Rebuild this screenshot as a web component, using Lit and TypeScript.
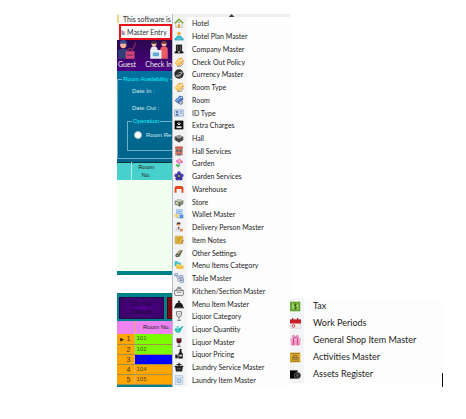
import { LitElement, html, svg, css, TemplateResult } from "lit";
import { customElement, property } from "lit/decorators.js";
import { classMap } from "lit/directives/class-map.js";

const tag = svg`<path d="M1 9 7 2l6-1 3 6-7 7-4 0z" fill="#f2a93b"/><path d="M1 9 7 3l5 0 1 4-6 6z" fill="#ffd07a"/><path d="M5 15h6l4-5" fill="none" stroke="#8f8a86" stroke-width="1.5"/><circle cx="12" cy="5" r="1.3" fill="#fff"/>`;

const icons: Record<string, TemplateResult> = {
  hotel: svg`<path d="M3 8v7h10V8L8 4z" fill="#fbf3df" stroke="#8a8f78" stroke-width=".8"/><path d="M1 8.5 8 2l7 6.5" fill="none" stroke="#7cab3c" stroke-width="2.4"/><path d="M6.500 15v-5h3v5z" fill="#dd8a35"/><circle cx="8" cy="7.300" r="1.200" fill="#55a5d8"/>`,
  plan: svg`<circle cx="8" cy="4" r="3" fill="#f4b23e"/><path d="M3 11q0-4 5-4t5 4z" fill="#37bcc9"/><path d="M1 11h14v4H1z" fill="#2aa3c4"/><path d="M4 12.500h8" stroke="#d8f5fa" stroke-width="1"/>`,
  company: svg`<path d="M3 1h10v12H3z" fill="#222"/><path d="M1 12h14v3H1z" fill="#111"/><path d="M5 3h1.500v8H5zM9.500 3H11v8H9.500z" fill="#666"/><path d="M6.500 11h3v4h-3z" fill="#999"/>`,
  tag,
  currency: svg`<circle cx="8" cy="8" r="7.500" fill="#2b2b2b"/><path d="M3 10q4 1 9-2l1-3q-5 0-6 2M4 12l7-1" fill="none" stroke="#c9c9c9" stroke-width="1.300"/>`,
  room: svg`<path d="M1 9 9 1l5 1 1 5-8 7z" fill="#3b6fb5"/><path d="m3 9 6-6 3 1-7 7z" fill="#86aee0"/><circle cx="11" cy="12" r="3" fill="#b5bcc9" stroke="#4c5e88"/><circle cx="12" cy="4" r="1.100" fill="#fff"/>`,
  id: svg`<path d="M1 3h14v10H1z" fill="#d5e5f6" stroke="#7393bb"/><circle cx="5" cy="6.500" r="1.800" fill="#3b6194"/><path d="M2.500 12q0-3 2.500-3t2.500 3z" fill="#3b6194"/><path d="M9 6h4M9 8.500h4" stroke="#4d75a8"/>`,
  charges: svg`<path d="M1 1h14v14H1z" fill="#080808"/><path d="M4 10h8v3H4z" fill="#ddd"/><path d="M8 3v5M5 5l3 3 3-3" fill="none" stroke="#fff" stroke-width="1.300"/>`,
  hall: svg`<path d="m1 6 7-3 7 3v5l-7 4-7-4z" fill="#555"/><path d="m1 6 7-3 7 3-7 3z" fill="#9a9a9a"/><path d="M8 9v6M4 7.500v5M12 7.500v5" stroke="#222"/>`,
  services: svg`<path d="M2 1h12v14H2z" fill="#b9837b"/><path d="M2 1h12v3H2z" fill="#cd5848"/><path d="M4 6h3v3H4zM9 6h3v3H9z" fill="#61554f"/><path d="M3 10h10v3H3z" fill="#de6f57"/><path d="M5 14h6" stroke="#3f6975" stroke-width="2"/>`,
  garden: svg`<path d="M9 8q1 5-3 7M8 12q-4-3-5 0 2 2 5 0" fill="#5cc45d" stroke="#45b754" stroke-width="1.400"/><circle cx="6" cy="5" r="2.500" fill="#f06bd1"/><circle cx="9" cy="3" r="2.500" fill="#f59ae0"/><circle cx="11.500" cy="6" r="2.500" fill="#ec5ec6"/><circle cx="8" cy="7.500" r="2.300" fill="#f48bd9"/><circle cx="9" cy="5.200" r="1.500" fill="#ffe14d"/>`,
  flower: svg`<circle cx="8" cy="3.500" r="3" fill="#453fb0"/><circle cx="3.600" cy="7" r="3" fill="#4d48ba"/><circle cx="12.400" cy="7" r="3" fill="#4d48ba"/><circle cx="5.300" cy="12" r="3" fill="#38339a"/><circle cx="10.700" cy="12" r="3" fill="#38339a"/><circle cx="8" cy="8" r="3.400" fill="#2a246f"/><circle cx="8" cy="8" r="1.500" fill="#ece64f"/>`,
  warehouse: svg`<path d="M1 14V6q0-3 3-3h8q3 0 3 3v8h-3V8H4v6z" fill="#e4481e"/>`,
  store: svg`<path d="m1 6 6-3 8 2v6l-6 4-8-3z" fill="#85897c"/><path d="m1 6 6-3 8 2-6 3z" fill="#c5c9bc"/><path d="M9 8v7" stroke="#454a40"/><path d="m3 8 4 1v3l-4-1z" fill="#d2d8a8"/>`,
  wallet: svg`<path d="M4 1h9v13H4z" fill="#c3dcf8" stroke="#78a8df"/><path d="M6 4h5M6 7h5" stroke="#4f8cd0"/><path d="M1 8h6v5H1z" fill="#f5d36c"/><path d="M9 9h6v6H9z" fill="#5794dc"/>`,
  delivery: svg`<circle cx="7" cy="4" r="3" fill="#e9b48f"/><path d="M4 4q0-4 4-3.500 3 0 2.500 3.500Q8 2 4 4z" fill="#503d35"/><path d="M2 15q0-7 5-7t6 7z" fill="#d9dce2"/><path d="m6 8 1.500 5L9 8z" fill="#5e5b60"/><path d="M10 11h4v4h-4z" fill="#e07d37"/>`,
  notes: svg`<path d="M2 2h12v12H2z" fill="#f0bf41" stroke="#c1922b"/><path d="M4 5h8M4 8h6M4 11h5" stroke="#8a6a25"/><path d="m11 13 4-5" stroke="#716a54" stroke-width="1.500"/>`,
  settings: svg`<path d="m4 13 7-10 3 1-5 10z" fill="#776f52"/><path d="m3 9 7-7 1 3-6 7z" fill="#a9a37f"/><circle cx="5" cy="12" r="2.800" fill="#50564a"/><circle cx="5" cy="12" r="1" fill="#ddd"/>`,
  folders: svg`<path d="M1 2h5l1 2h4v6H1z" fill="#3fc0ce"/><path d="M4 6h4l1 2h6v6H4z" fill="#ffd55f"/><path d="M4 10h11v4H4z" fill="#f7bf3d"/>`,
  tree: svg`<path d="M3 3v3h6M6 6v7h5M6 9h5" fill="none" stroke="#6d7f9f" stroke-width="1"/><path d="M1 1h5v3H1zM9 4h5v3H9zM10 8h5v3h-5zM10 12h5v3h-5z" fill="#e3eefb" stroke="#4c6896" stroke-width=".900"/>`,
  kitchen: svg`<path d="M1 7h14v6q0 2-2 2H3q-2 0-2-2z" fill="#f9f9f9" stroke="#555" stroke-width="1.200"/><path d="M3 7q0-3 5-3t5 3M6 4V2h4v2M4 10h8" fill="none" stroke="#555" stroke-width="1.200"/>`,
  cloche: svg`<path d="M1 13q1-7 7-8 6 1 7 8z" fill="#191919"/><circle cx="8" cy="4" r="1.700" fill="#191919"/><path d="M0 14h16" stroke="#191919" stroke-width="1.600"/>`,
  glass: svg`<path d="M4 1h8v5q0 3-4 4-4-1-4-4zM8 10v4M5 15h6" fill="#f5f5f5" stroke="#555" stroke-width="1.200"/><path d="m6 4 3 3M9 3l1 2" stroke="#444"/>`,
  teal: svg`<path d="M1 8q1-2 4-1 3 1 5-1l3-3 2 1-3 4q-1 6-5 6-5 0-6-6z" fill="#25b9b8"/><path d="M6 3v3M4 5h4" stroke="#4accc8" stroke-width="1.500"/><path d="m4 10 5 1" stroke="#84e3e0" stroke-width="1.200"/>`,
  wine: svg`<path d="M4 2h8v4q0 4-4 4T4 6z" fill="#5e1720"/><path d="M5 2h6v2H5z" fill="#9c4a50"/><path d="M8 10v4M5 15h6" stroke="#513d3d" stroke-width="1.300"/>`,
  bottle: svg`<path d="M9 0h3v5l2 2v8H7V7l2-2z" fill="#121212"/><path d="M2 9h4v6H2z" fill="#222"/><path d="M8.500 9h4v3h-4z" fill="#ddd"/>`,
  laundry: svg`<path d="M2 8h12l-1 7H3z" fill="#222"/><path d="M1 6h14v2H1zM7 1h2v5H7z" fill="#222"/><path d="M4 4h8" stroke="#222" stroke-width="1.500"/><path d="M5 11h6" stroke="#888"/>`,
  washer: svg`<path d="M2 1h12v14H2z" fill="#e7f1fa" stroke="#9bb3ce"/><path d="M2 4.500h12" stroke="#8da9c8"/><path d="M5 7h6v5H5z" fill="#bcd7ef" stroke="#7899bd"/>`,
  tax: svg`<path d="M0 1h15v14H0z" fill="#6fae36"/><path d="M2 3h11v10H2z" fill="#a1d45f" stroke="#4e8a24"/><path d="M10 5.500q-4-2-4 .5 0 1.500 2 2t2 2q-1 2-4.500.5M8 3.500v9" fill="none" stroke="#2d6017" stroke-width="1.200"/>`,
  calendar: svg`<path d="M0 4h16v11H0z" fill="#f1eded" stroke="#c4b4b4" stroke-width=".6"/><path d="M0 2h16v6H0z" fill="#cc2029"/><path d="M4 0v4M11 0v4" stroke="#8c1d22" stroke-width="1.600"/><circle cx="5" cy="11.500" r="2" fill="none" stroke="#c8323a" stroke-width="1.200"/>`,
  gift: svg`<path d="M1 6h14v9H1z" fill="#f09ac4"/><path d="M0 4h16v4H0z" fill="#f5b6d6"/><path d="M5 4v11M11 4v11" stroke="#d4488e" stroke-width="1.800"/><path d="M8 4Q3 4 4 1q3-1 4 3 1-4 4-3 1 3-4 3z" fill="none" stroke="#d4488e" stroke-width="1.300"/>`,
  chest: svg`<path d="M0 1h15v14H0z" fill="#ddaa2c"/><path d="M1 2h13M1 13.500h13" stroke="#8f6a19" stroke-width="1.200"/><path d="M3 7h9v4H3z" fill="#7b5a1b"/><path d="M5 7V5h5v2" fill="none" stroke="#7b5a1b"/><path d="M4 9h7" stroke="#ffe185"/>`,
  assets: svg`<path d="M0 2h11v12H0z" fill="#050505"/><circle cx="11" cy="9.500" r="4.600" fill="#111" stroke="#bbb" stroke-width=".7"/><path d="M9 7.500h4M9 9.500h4M9 11.500h4" stroke="#999" stroke-width=".8"/>`,
  guest: svg`<circle cx="5" cy="4" r="2.500" fill="#f5b694"/><path d="M2 3q0-3 3-3t3 3z" fill="#3c4f92"/><path d="M1 15V9q0-2 4-2t4 2v6z" fill="#303f78"/><path d="M7 9h7v6H7z" fill="#d6437b"/><path d="M9 9V7h3v2M8 12h5M13 7l2-5" fill="none" stroke="#7f3157" stroke-width="1"/>`,
  checkin: svg`<circle cx="4" cy="3" r="2" fill="#f4c0a0"/><circle cx="12" cy="3" r="2" fill="#f4c0a0"/><path d="M2 3q0-3 3-2l1 2z" fill="#3b2430"/><path d="M10 3q0-3 3-2l1 2z" fill="#7c3131"/><path d="M1 9q0-4 3-4t3 4z" fill="#ede7ee"/><path d="M9 15V8q0-3 3-3t3 3v7z" fill="#ec5a64"/><path d="M1 8h9v7H1z" fill="#e5f0f5"/><path d="M3 10h5v3H3z" fill="#61a9cf"/>`,
  entry: svg`<path d="M1 1h6v14H1z" fill="#8fa9c9"/><circle cx="9" cy="7" r="3" fill="#d37c62"/><path d="M4 15q0-5 5-5t5 5z" fill="#4f80b7"/>`,
};

@customElement("ui-icon")
class UiIcon extends LitElement {
  @property() name = "";
  static styles = css`
    :host { display: block; flex: none; }
    svg { display: block; width: 100%; height: 100%; }
  `;
  render() {
    return html`<svg viewBox="0 0 16 16" aria-hidden="true">${icons[this.name]}</svg>`;
  }
}

const masters: [string, string][] = [
  ["hotel", "Hotel"], ["plan", "Hotel Plan Master"], ["company", "Company Master"],
  ["tag", "Check Out Policy"], ["currency", "Currency Master"], ["tag", "Room Type"],
  ["room", "Room"], ["id", "ID Type"], ["charges", "Extra Charges"], ["hall", "Hall"],
  ["services", "Hall Services"], ["garden", "Garden"], ["flower", "Garden Services"],
  ["warehouse", "Warehouse"], ["store", "Store"], ["wallet", "Wallet Master"],
  ["delivery", "Delivery Person Master"], ["notes", "Item Notes"], ["settings", "Other Settings"],
  ["folders", "Menu Items Category"], ["tree", "Table Master"], ["kitchen", "Kitchen/Section Master"],
  ["cloche", "Menu Item Master"], ["glass", "Liquor Category"], ["teal", "Liquor Quantity"],
  ["wine", "Liquor Master"], ["bottle", "Liquor Pricing"], ["laundry", "Laundry Service Master"],
  ["washer", "Laundry Item Master"],
];

const extras: [string, string][] = [
  ["tax", "Tax"], ["calendar", "Work Periods"], ["gift", "General Shop Item Master"],
  ["chest", "Activities Master"], ["assets", "Assets Register"],
];

@customElement("drop-menu")
class DropMenu extends LitElement {
  @property({ attribute: false }) items: [string, string][] = [];
  @property({ type: Boolean, reflect: true }) large = false;
  static styles = css`
    :host { display: flex; flex-direction: column; }
    .list {
      flex: 1; display: flex; flex-direction: column; margin: 0; padding: 0; list-style: none;
      background: linear-gradient(90deg, #f3f4f5 14px, #fdfdfd 14px);
    }
    .row { flex: 1 1 0; min-height: 12px; display: flex; }
    .item {
      flex: 1; display: flex; align-items: center; gap: 8px; min-width: 0; padding: 0 0 0 1px;
      border: 0; background: none; color: #1c1c1c; font: 7px/12px Lato, "Noto Sans", sans-serif;
      text-align: left; white-space: nowrap;
    }
    ui-icon { width: 10px; height: 10px; }
    :host([large]) .row { min-height: 17px; }
    :host([large]) .item { font-size: 9px; padding: 0; gap: 12px; }
    :host([large]) ui-icon { width: 11px; height: 11px; }
  `;
  render() {
    return html`<ul class="list">
      ${this.items.map(([icon, label]) => html`<li class="row">
        <button class="item" type="button"><ui-icon name=${icon}></ui-icon>${label}</button>
      </li>`)}
    </ul>`;
  }
}

@customElement("app-root")
class AppRoot extends LitElement {
  static styles = css`
    :host { display: block; min-height: 100vh; background: #fff; font: 6px/8px "Liberation Sans", sans-serif; }
    * { box-sizing: border-box; }
    .page {
      display: grid; grid-template-columns: 55px 118px minmax(0, 1fr); align-items: stretch;
      padding: 14px 23px 0 117px;
    }
    .desk { display: flex; flex-direction: column; min-width: 0; overflow: hidden; background: #00828c; white-space: nowrap; }
    .title {
      height: 10px; display: flex; align-items: center; gap: 4px; background: #f6f7f9;
      font: 7px/8px Lato, sans-serif; color: #333;
    }
    .mark { width: 2px; height: 8px; background: #f1d48b; }
    .strip { display: flex; padding-left: 2px; background: #f6f7f9; }
    .entry {
      flex: 1; height: 16px; display: flex; align-items: center; gap: 1px; padding: 0;
      border: 2px solid #e8121b; background: #fafafa; color: #333; font: 7px/8px Lato, sans-serif;
    }
    .entry ui-icon { width: 5px; height: 9px; }
    .tools { height: 31px; display: flex; justify-content: space-between; background: linear-gradient(#2b064f, #4b0082); }
    .tool {
      display: flex; flex-direction: column; align-items: center; padding: 0; border: 0; background: none;
      color: #eee; font: 7px/8px Lato, sans-serif;
    }
    .tool ui-icon { width: 20px; height: 20px; }
    .availability { height: 91px; padding-top: 4px; background: linear-gradient(#00709e, #006489); color: #d5e9f2; }
    .group { min-width: 0; margin: 0; padding: 0; border: 1px solid #6fb0c8; border-right: 0; }
    .group legend { margin-left: 4px; padding: 0 1px; color: #0ff0f4; line-height: 8px; }
    .outer { height: 84px; }
    .field { margin: 0 0 0 14px; line-height: 17px; }
    .inner { height: 34px; margin: 0 0 0 9px; }
    .choice { display: flex; align-items: center; gap: 4px; padding: 6px 0 0 6px; }
    .radio { appearance: none; flex: none; width: 8px; height: 8px; margin: 0; border: 1px solid #a9bcc4; border-radius: 50%; background: #fff; }
    .grid { border-collapse: collapse; width: 100%; table-layout: fixed; }
    .grid th, .grid td { padding: 0; font-weight: 400; }
    .rooms { border-top: 1px solid #10343c; }
    .rooms th { height: 17px; background: #48d1cc; color: #222; }
    .stub { width: 14px; border-right: 1px solid #b5ece9; }
    .rooms .name { padding-right: 11px; }
    .rooms td { height: 91px; background: #f0fff0; }
    .search { height: 18px; margin: 4px 0 0; padding: 0; border: 0; background: #fff; width: 100%; min-width: 0; }
    .actions { height: 28px; display: flex; gap: 3px; padding: 4px 0 2px 2px; }
    .action { flex: none; width: 45px; padding: 0; border: 1px solid #25064b; background: radial-gradient(#520090, #36045f); color: #160a2a; font: 7px/8px "Liberation Sans", sans-serif; }
    .red { background: #7a0810; border-color: #4d070b; }
    .status th { height: 13px; background: #ee82ee; color: #222; text-align: right; padding-right: 2px; }
    .status .num { width: 17px; padding-right: 3px; border-right: 1px solid #e5b264; }
    .status td, .status tbody th { height: 10px; line-height: 9px; border-bottom: 1px solid #a79045; color: #4c4a20; }
    .status tbody th { background: #ffa500; color: #4a3308; font-size: 7px; }
    .status td { padding-left: 2px; font-size: 6px; }
    .status .free td { background: #7cfc00; }
    .status .picked td { background: #00f; color: #2a2a80; }
    .status .busy td { background: #ffa500; }
    .flag { font-size: 5px; padding-right: 3px; color: #222; }
    .foot { height: 2px; }
    .menu { display: flex; flex-direction: column; border-left: 1px solid #b8bdc2; }
    .scroll { height: 3px; padding: 0; border: 0; background: #eee; display: flex; justify-content: center; }
    .arrow { width: 6px; height: 3px; background: #444; clip-path: polygon(50% 0, 100% 100%, 0 100%); }
    .menu drop-menu { flex: 1; }
    .side { display: flex; align-items: flex-end; justify-content: space-between; }
    .side drop-menu { flex: 1; margin-bottom: 4px; }
    .caret { width: 1px; height: 14px; background: #111; }
  `;
  render() {
    const rooms: [number, string][] = [[101, "free"], [102, "free"], [103, "picked"], [104, "busy"], [105, "busy"]];
    return html`<main class="page">
      <section class="desk">
        <div class="title"><span class="mark"></span>This software is</div>
        <div class="strip"><button class="entry" type="button"><ui-icon name="entry"></ui-icon>Master Entry</button></div>
        <div class="tools">
          <button class="tool" type="button"><ui-icon name="guest"></ui-icon>Guest</button>
          <button class="tool" type="button"><ui-icon name="checkin"></ui-icon>Check In</button>
        </div>
        <div class="availability">
          <fieldset class="group outer">
            <legend>Room Availability</legend>
            <p class="field">Date In :</p>
            <p class="field">Date Out :</p>
            <fieldset class="group inner">
              <legend>Operation</legend>
              <label class="choice"><input class="radio" type="radio" name="operation" />Room Re</label>
            </fieldset>
          </fieldset>
        </div>
        <table class="grid rooms">
          <thead><tr><th class="stub"></th><th class="name">Room<br />No.</th></tr></thead>
          <tbody><tr><td colspan="2"></td></tr></tbody>
        </table>
        <input class="search" type="text" aria-label="Search" />
        <div class="actions">
          <button class="action" type="button">Do not<br />Disturb</button>
          <button class="action red" type="button" aria-label="Blocked"></button>
        </div>
        <table class="grid status">
          <thead><tr><th class="num"></th><th>Room No.</th></tr></thead>
          <tbody>
            ${rooms.map(([no, state], i) => html`<tr class=${classMap({ [state]: true })}>
              <th class="num" scope="row">${i === 0 ? html`<span class="flag">▶</span>` : ""}${i + 1}</th><td>${no}</td>
            </tr>`)}
          </tbody>
        </table>
        <div class="foot"></div>
      </section>
      <nav class="menu" aria-label="Master Entry">
        <button class="scroll" type="button" aria-label="Scroll up"><span class="arrow"></span></button>
        <drop-menu .items=${masters}></drop-menu>
      </nav>
      <nav class="side" aria-label="More masters">
        <drop-menu large .items=${extras}></drop-menu>
        <span class="caret"></span>
      </nav>
    </main>`;
  }
}
